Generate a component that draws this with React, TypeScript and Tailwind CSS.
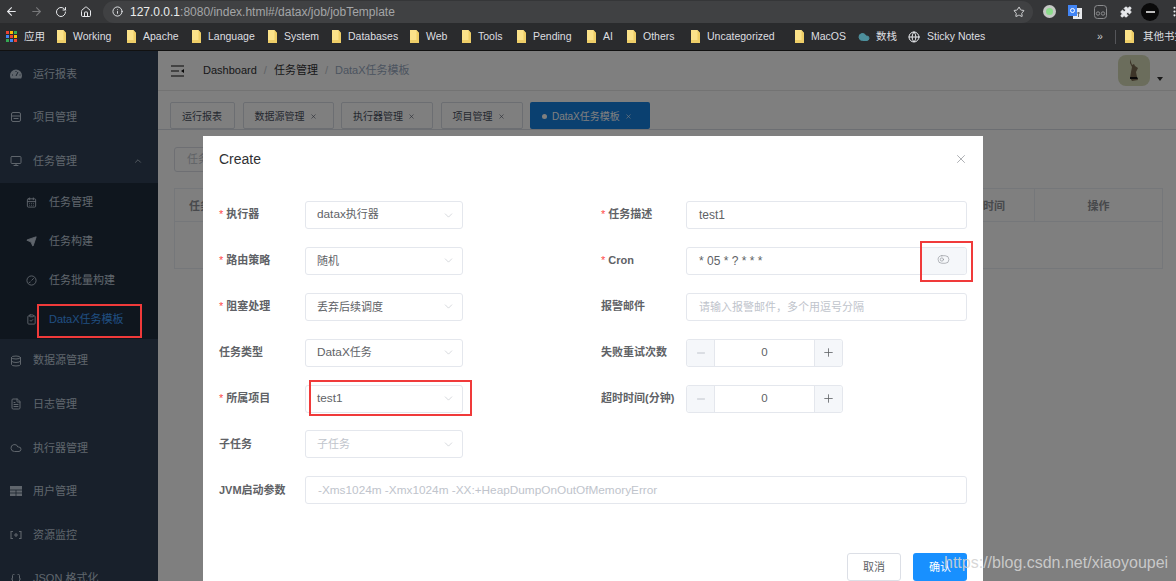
import React from "react";
import {
  ArrowLeft, ArrowRight, RotateCw, Home, Info, Star, Puzzle, Monitor, ChevronUp, ChevronDown,
  Send, Database, FileText, Cloud, Braces, X, Plus, Minus, ClipboardCheck, CalendarDays, Globe, ToggleLeft, MoreVertical,
} from "lucide-react";

type IconT = React.ComponentType<{ size?: number; className?: string; fill?: string }>;

const Folder = () => (
  <svg width="9" height="13" viewBox="0 0 9 13" className="shrink-0">
    <path d="M0 0h6.5L9 3v10H0z" fill="#fbe28a" />
    <path d="M6.5 0v10H0v3h9V3z" fill="#e9c75c" opacity="0.75" />
  </svg>
);

const GaugeFill: IconT = ({ size = 12, className }) => (
  <svg width={size} height={size} viewBox="0 0 12 12" className={className}>
    <path d="M6 1.5a6 6 0 0 0-6 6c0 1.2.3 2 .8 3h10.4c.5-1 .8-1.8.8-3a6 6 0 0 0-6-6z" fill="currentColor" />
    <path d="M6 8L8 4M2 7h1M9.5 7h1M6 3v1" stroke="#304156" strokeWidth="1" />
  </svg>
);
const FormIcon: IconT = ({ size = 12, className }) => (
  <svg width={size} height={size} viewBox="0 0 12 12" fill="none" stroke="currentColor" strokeWidth="1" className={className}>
    <rect x="1.5" y="1.5" width="9" height="9" rx="1.5" />
    <path d="M1.5 5h9M3.5 7.5h5" />
  </svg>
);
const GridFill: IconT = ({ size = 12, className }) => (
  <svg width={size} height={size} viewBox="0 0 12 12" className={className}>
    <path d="M0 1h12v10H0z" fill="currentColor" />
    <path d="M0 5h12M0 8h12M6 5v6" stroke="#304156" strokeWidth="0.8" />
  </svg>
);
const Bracket: IconT = ({ size = 12, className }) => (
  <svg width={size} height={size} viewBox="0 0 12 12" fill="none" stroke="currentColor" strokeWidth="1.1" className={className}>
    <path d="M3 2.5H1v7h2M9 2.5h2v7H9M4 6h4M6 4v4" />
  </svg>
);
const TimerFill: IconT = ({ size = 11, className }) => (
  <svg width={size} height={size} viewBox="0 0 12 12" fill="none" stroke="currentColor" strokeWidth="1" className={className}>
    <circle cx="6" cy="6" r="5" />
    <path d="M6 6l2.5-2.5M3 8.5l2-1" />
  </svg>
);
const SendFill: IconT = ({ size = 11, className }) => <Send size={size} fill="currentColor" className={className} />;

const bookmarks = [
  { t: "Working", w: "w-[70px]" }, { t: "Apache", w: "w-[65px]" }, { t: "Language", w: "w-[76px]" },
  { t: "System", w: "w-[64px]" }, { t: "Databases", w: "w-[78px]" }, { t: "Web", w: "w-[52px]" },
  { t: "Tools", w: "w-[55px]" }, { t: "Pending", w: "w-[70px]" }, { t: "AI", w: "w-[40px]" },
  { t: "Others", w: "w-[64px]" }, { t: "Uncategorized", w: "w-[104px]" }, { t: "MacOS", w: "w-[63px]" },
];

function Chrome() {
  return (
    <div className="h-[51px] shrink-0 flex flex-col text-[#dedfe0]">
      <div className="h-[23px] bg-[#353638] flex items-center pl-[5px] overflow-hidden">
        <ArrowLeft size={13} className="text-[#e8eaed] shrink-0" />
        <ArrowRight size={13} className="text-[#77787a] ml-[12px] shrink-0" />
        <RotateCw size={12} className="text-[#e8eaed] ml-[12px] shrink-0" />
        <Home size={12} className="text-[#e8eaed] ml-[13px] shrink-0" />
        <div className="ml-[11px] w-[930px] h-[22px] rounded-full bg-[#404143] flex items-center pl-[9px] pr-[8px] shrink-0">
          <Info size={11} className="text-[#e8eaed]" />
          <span className="ml-[7px] text-[12px] leading-none">
            <span className="text-[#eceded]">127.0.0.1</span>
            <span className="text-[#a4a5a7]">:8080/index.html#/datax/job/jobTemplate</span>
          </span>
          <Star size={12} className="ml-auto text-[#d5d6d8]" />
        </div>
        <div className="ml-[10px] w-[13px] h-[13px] rounded-full bg-[#c5c8c5] flex items-center justify-center shrink-0">
          <div className="w-[7px] h-[7px] rounded-full bg-[#8bdc8b]" />
        </div>
        <svg width="14" height="14" viewBox="0 0 14 14" className="ml-[12px] shrink-0">
          <rect x="5" y="3" width="9" height="11" fill="#e8eaed" />
          <rect x="0" y="0" width="9" height="11" fill="#4285f4" />
          <circle cx="4.5" cy="5.5" r="2" fill="none" stroke="#fff" strokeWidth="1" />
          <path d="M9 8h3M10.5 7v5" stroke="#666" strokeWidth="1" />
        </svg>
        <svg width="13" height="14" viewBox="0 0 13 14" fill="none" stroke="#8a8b8d" className="ml-[12px] shrink-0">
          <rect x="0.5" y="0.5" width="12" height="13" rx="3" />
          <circle cx="4" cy="8.5" r="1.7" /><circle cx="9" cy="8.5" r="1.7" />
        </svg>
        <Puzzle size={12} fill="#e8eaed" className="ml-[13px] text-[#e8eaed] shrink-0" />
        <div className="ml-[9px] w-[18px] h-[18px] rounded-full bg-[#0a0a0a] flex items-center justify-center shrink-0">
          <div className="w-[9px] h-[2px] bg-[#bdbdbd]" />
        </div>
        <MoreVertical size={13} className="ml-[9px] text-[#e8eaed] shrink-0" />
      </div>
      <div className="h-[28px] bg-[#2a2b2d] border-b border-[#111] flex items-center pl-[6px] text-[10.5px] whitespace-nowrap overflow-hidden">
        <svg width="11" height="12" viewBox="0 0 11 12" className="shrink-0">
          <rect x="0" y="0" width="3" height="3" fill="#ea4335" /><rect x="4" y="0" width="3" height="3" fill="#fbbc05" /><rect x="8" y="0" width="3" height="3" fill="#34a853" />
          <rect x="0" y="4" width="3" height="3" fill="#4285f4" /><rect x="4" y="4" width="3" height="3" fill="#ea4335" /><rect x="8" y="4" width="3" height="3" fill="#fbbc05" />
          <rect x="0" y="8" width="3" height="3" fill="#34a853" /><rect x="4" y="8" width="3" height="3" fill="#4285f4" /><rect x="8" y="8" width="3" height="3" fill="#ea4335" />
        </svg>
        <span className="ml-[7px] w-[33px] shrink-0">应用</span>
        {bookmarks.map((b) => (
          <div key={b.t} className={`flex items-center gap-[7px] shrink-0 ${b.w}`}>
            <Folder />
            <span>{b.t}</span>
          </div>
        ))}
        <Cloud size={12} fill="#4d8f9c" className="text-[#4d8f9c] shrink-0" />
        <span className="ml-[6px] w-[32px] shrink-0">数栈</span>
        <Globe size={12} className="text-[#e8eaed] shrink-0" />
        <span className="ml-[7px] w-[170px] shrink-0">Sticky Notes</span>
        <span className="w-[12px] shrink-0 text-[#c9cacc]">»</span>
        <div className="w-px h-[14px] bg-[#55565a] ml-[6px] mr-[9px] shrink-0" />
        <Folder />
        <span className="ml-[9px] shrink-0">其他书签</span>
      </div>
    </div>
  );
}

const topA: { t: string; I: IconT }[] = [
  { t: "运行报表", I: GaugeFill }, { t: "项目管理", I: FormIcon },
];
const subs: { t: string; I: IconT; active?: boolean }[] = [
  { t: "任务管理", I: CalendarDays as IconT }, { t: "任务构建", I: SendFill }, { t: "任务批量构建", I: TimerFill }, { t: "DataX任务模板", I: ClipboardCheck as IconT, active: true },
];
const topB: { t: string; I: IconT }[] = [
  { t: "数据源管理", I: Database as IconT }, { t: "日志管理", I: FileText as IconT }, { t: "执行器管理", I: Cloud as IconT },
  { t: "用户管理", I: GridFill }, { t: "资源监控", I: Bracket }, { t: "JSON 格式化", I: Braces as IconT },
];

function TopRow({ t, I }: { t: string; I: IconT }) {
  return (
    <div className="h-[43.6px] shrink-0 flex items-center pl-[10px] text-[#bfcbd9] text-[11px]">
      <I size={12} className="shrink-0" />
      <span className="ml-[11px]">{t}</span>
    </div>
  );
}

function Sidebar() {
  return (
    <div className="w-[158px] shrink-0 bg-[#304156] flex flex-col overflow-hidden pt-[1px]">
      {topA.map((r) => <TopRow key={r.t} {...r} />)}
      <div className="h-[43.6px] shrink-0 flex items-center pl-[10px] pr-[15px] text-[#bfcbd9] text-[11px]">
        <Monitor size={12} className="shrink-0" />
        <span className="ml-[11px]">任务管理</span>
        <ChevronUp size={10} className="ml-auto" />
      </div>
      <div className="bg-[#1f2d3d] shrink-0">
        {subs.map((s) => (
          <div key={s.t} className={`h-[39px] flex items-center pl-[26px] text-[11px] ${s.active ? "text-[#409eff]" : "text-[#bfcbd9]"}`}>
            <s.I size={11} className={`shrink-0 ${s.active ? "text-[#bfcbd9]" : ""}`} />
            <span className="ml-[12px]">{s.t}</span>
          </div>
        ))}
      </div>
      {topB.map((r) => <TopRow key={r.t} {...r} />)}
    </div>
  );
}

const tabs = [
  { t: "运行报表", w: "w-[65px]" }, { t: "数据源管理", x: true, w: "w-[91px]" }, { t: "执行器管理", x: true, w: "w-[92px]" }, { t: "项目管理", x: true, w: "w-[82px]" },
];

function MainArea() {
  return (
    <div className="flex-1 min-w-0 bg-white flex flex-col">
      <div className="h-[40px] border-b border-[#e6e6e6] flex items-center pl-[13px] pr-[13px] shrink-0">
        <svg width="14" height="12" viewBox="0 0 14 12" className="shrink-0" fill="none" stroke="#111" strokeWidth="1.2">
          <path d="M0 1h13M0 6h8M0 11h13" /><path d="M13 4v4l-3-2z" fill="#111" stroke="none" />
        </svg>
        <span className="ml-[18px] text-[11px] text-[#303133]">Dashboard</span>
        <span className="mx-[7px] text-[11px] text-[#c0c4cc]">/</span>
        <span className="text-[11px] text-[#303133]">任务管理</span>
        <span className="mx-[7px] text-[11px] text-[#c0c4cc]">/</span>
        <span className="text-[11px] text-[#97a8be]">DataX任务模板</span>
        <div className="ml-auto h-[31px] w-[32px] rounded-[8px] bg-[#d6dbb8] flex items-center justify-center">
          <svg width="16" height="26" viewBox="0 0 16 26">
            <path d="M4 1l2 6 2-1 1 2 3 2-2 4 1 5 1 3-6 1-2-3 1-6 1-5-2-4z" fill="#7a6a50" />
            <path d="M4 19h7l1 2H4z" fill="#111" />
          </svg>
        </div>
        <div className="ml-[7px] mt-[16px] w-0 h-0 border-x-[3px] border-x-transparent border-t-[4px] border-t-[#333]" />
      </div>
      <div className="h-[39px] border-b border-[#d8dce5] flex items-end pl-[12px] gap-[7.5px] shrink-0">
        {tabs.map((t) => (
          <div key={t.t} className={`h-[27px] border border-[#d8dce5] rounded-[2px] flex items-center pl-[11px] pt-[1px] text-[10px] text-[#495060] ${t.w}`}>
            <span>{t.t}</span>
            {t.x && <X size={7} className="ml-[5px]" />}
          </div>
        ))}
        <div className="h-[27px] w-[120px] bg-[#1580e0] rounded-[2px] flex items-center pl-[12px] pt-[1px] text-[10px] text-[#fff]">
          <div className="w-[5px] h-[5px] rounded-full bg-white" />
          <span className="ml-[5px]">DataX任务模板</span>
          <X size={7} className="ml-[5px]" />
        </div>
      </div>
      <div className="pl-[16px] pr-[13px] pt-[17px]">
        <div className="h-[25px] w-[120px] border border-[#dcdfe6] rounded-[3px] flex items-center pl-[12px] text-[11px] text-[#c0c4cc]">任务描述</div>
        <div className="mt-[16px] border border-[#ebeef5] h-[81px]">
          <div className="h-[33px] border-b border-[#ebeef5] flex items-center pl-[14px] text-[11px] font-bold text-[#909399]">
            <span className="mt-[2px]">任务ID</span>
            <span className="ml-auto mr-[29px] mt-[2px]">更新时间</span>
            <div className="w-[128px] h-full border-l border-[#ebeef5] flex items-center justify-center pt-[2px]">操作</div>
          </div>
        </div>
      </div>
    </div>
  );
}

function Req({ children, req }: { children: React.ReactNode; req?: boolean }) {
  return (
    <label className="block mb-[1px] font-bold text-[11px] text-[#606266] whitespace-nowrap">
      {req && <span className="text-[#ff4949] font-normal mr-[3px]">*</span>}
      {children}
    </label>
  );
}

function Row({ label, req, right, children }: { label: string; req?: boolean; right?: boolean; children: React.ReactNode }) {
  return (
    <div className="flex items-center h-[28px]">
      <div className={`shrink-0 ${right ? "w-[85px]" : "w-[86px]"}`}><Req req={req}>{label}</Req></div>
      {children}
    </div>
  );
}

function Select({ value, muted }: { value: React.ReactNode; muted?: boolean }) {
  return (
    <div className="w-[158px] h-[28px] border border-[#e4e7ed] rounded-[3px] flex items-center pl-[11px] pr-[7px] text-[11px]">
      <span className={muted ? "text-[#c0c4cc]" : "text-[#606266]"}>{value}</span>
      <ChevronDown size={13} strokeWidth={1} className="ml-auto text-[#b4b8c0]" />
    </div>
  );
}

function TextInput({ value, placeholder, className }: { value?: string; placeholder?: string; className?: string }) {
  return (
    <div className={`flex-1 h-[28px] border border-[#e4e7ed] rounded-[3px] flex items-center pl-[12px] ${className ?? "text-[11px]"}`}>
      {value ? <span className="text-[#606266]">{value}</span> : <span className="text-[#c0c4cc]">{placeholder}</span>}
    </div>
  );
}

function Num() {
  return (
    <div className="w-[157px] h-[28px] border border-[#e4e7ed] rounded-[3px] flex items-center text-[11.5px] text-[#606266]">
      <div className="w-[28px] h-full bg-[#f5f7fa] border-r border-[#e4e7ed] flex items-center justify-center rounded-l-[3px]">
        <Minus size={12} className="text-[#c0c4cc]" />
      </div>
      <span className="flex-1 text-center">0</span>
      <div className="w-[28px] h-full bg-[#f5f7fa] border-l border-[#e4e7ed] flex items-center justify-center rounded-r-[3px]">
        <Plus size={13} strokeWidth={1.5} className="text-[#606266]" />
      </div>
    </div>
  );
}

function Modal() {
  return (
    <div className="absolute left-[203px] top-[85px] w-[780px] bg-white px-[16px] text-[#606266]">
      <div className="h-[65px] pt-[14px] flex justify-between">
        <span className="text-[14px] leading-[18px] text-[#303133]">Create</span>
        <X size={14} strokeWidth={1.1} className="mt-[2px] mr-[-1px] text-[#808389]" />
      </div>
      <div className="grid grid-cols-[382px_1fr] gap-y-[17.9px]">
        <Row label="执行器" req><Select value={<><span className="text-[11.8px]">datax</span>执行器</>} /></Row>
        <Row label="任务描述" req right><TextInput value="test1" className="text-[12px]" /></Row>
        <Row label="路由策略" req><Select value="随机" /></Row>
        <Row label="Cron" req right>
          <div className="flex-1 h-[28px] border border-[#e4e7ed] rounded-[3px] flex items-center pl-[12px] text-[12px]">
            <span>* 05 * ? * * *</span>
            <div className="ml-auto w-[46px] h-full bg-[#f5f7fa] border-l border-[#e4e7ed] flex items-center justify-center rounded-r-[3px]">
              <ToggleLeft size={13} strokeWidth={1.2} className="mb-[2px] text-[#909399]" />
            </div>
          </div>
        </Row>
        <Row label="阻塞处理" req><Select value="丢弃后续调度" /></Row>
        <Row label="报警邮件" right><TextInput placeholder="请输入报警邮件，多个用逗号分隔" /></Row>
        <Row label="任务类型"><Select value={<><span className="text-[11.8px]">DataX</span>任务</>} /></Row>
        <Row label="失败重试次数" right><Num /></Row>
        <Row label="所属项目" req><Select value={<span className="text-[11.8px]">test1</span>} /></Row>
        <Row label="超时时间(分钟)" right><Num /></Row>
        <Row label="子任务"><Select value="子任务" muted /></Row>
        <div />
        <div className="col-span-2">
          <Row label="JVM启动参数"><TextInput placeholder="-Xms1024m -Xmx1024m -XX:+HeapDumpOnOutOfMemoryError" className="text-[11.8px]" /></Row>
        </div>
      </div>
      <div className="mt-[49px] flex justify-end gap-[12px] text-[11px]">
        <button className="w-[54px] h-[28px] border border-[#dcdfe6] rounded-[3px] text-[#606266]">取消</button>
        <button className="w-[54px] h-[28px] bg-[#1890ff] rounded-[3px] text-white">确认</button>
      </div>
    </div>
  );
}

export default function App() {
  return (
    <div className="relative w-[1176px] h-[581px] overflow-hidden flex flex-col font-['Liberation_Sans','Noto_Sans_CJK_SC',sans-serif]">
      <Chrome />
      <div className="relative flex-1 min-h-0 flex">
        <Sidebar />
        <MainArea />
        <div className="absolute inset-0 bg-black/50" />
        <Modal />
        <div className="absolute left-[37px] top-[253px] w-[105px] h-[34px] border-2 border-[#f03a3a]" />
        <div className="absolute left-[309px] top-[329px] w-[163px] h-[36px] border-2 border-[#f03a3a]" />
        <div className="absolute left-[920px] top-[190px] w-[53px] h-[41px] border-2 border-[#f03a3a]" />
        <span className="absolute left-[944px] top-[503px] text-[16px] leading-[18px] text-[#d2d2d2]/90">https://blog.csdn.net/xiaoyoupei</span>
      </div>
    </div>
  );
}
